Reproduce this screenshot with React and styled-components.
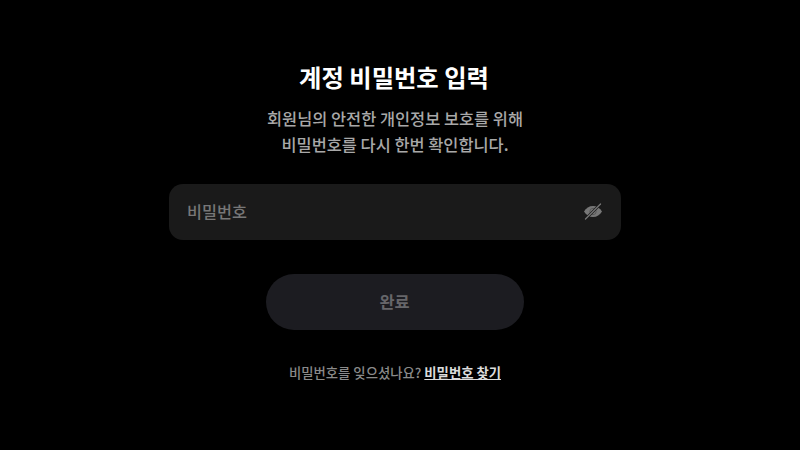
import styled, { createGlobalStyle } from "styled-components"

const GlobalStyle = createGlobalStyle`
  html, body {
    margin: 0;
    height: 100%;
    background: #000;
  }

  body {
    font-family: "Noto Sans CJK KR", "Noto Sans", sans-serif;
  }
`

const EyeOff = () => (
  <svg width="20" height="18" viewBox="0 0 20 18">
    <path
      d="M1 8.5C3 5 6.2 3 10 3s7 2 9 5.5C17 12 13.8 14 10 14S3 12 1 8.5Z"
      fill="#777"
    />
    <circle cx="10" cy="8.5" r="3.2" fill="none" stroke="#5a5a5a" strokeWidth="1" />
    <path d="M17.5 1 2.5 16" stroke="#1a1a1a" strokeWidth="2.6" />
    <path d="M17.5 1 2.5 16" stroke="#777" strokeWidth="1.3" strokeLinecap="round" />
  </svg>
)

const App = () => {
  return (
    <>
      <GlobalStyle />
      <Page>
        <Title>계정 비밀번호 입력</Title>
        <Description>
          회원님의 안전한 개인정보 보호를 위해
          <br />
          비밀번호를 다시 한번 확인합니다.
        </Description>
        <Field>
          <Placeholder>비밀번호</Placeholder>
          <EyeOff />
        </Field>
        <Submit>완료</Submit>
        <Footer>
          비밀번호를 잊으셨나요? <a href="/">비밀번호 찾기</a>
        </Footer>
      </Page>
    </>
  )
}

const Page = styled.main`
  width: 790px;
  height: 450px;
  display: flex;
  flex-direction: column;
  align-items: center;
  padding-top: 59px;
  box-sizing: border-box;
  overflow: hidden;
`

const Title = styled.h1`
  margin: 0 2px 0 0;
  font-size: 24.3px;
  line-height: 36px;
  font-weight: 700;
  color: #fff;
`

const Description = styled.p`
  margin: 10px 0 0;
  font-size: 16.4px;
  line-height: 26px;
  font-weight: 500;
  color: #a8a8a8;
  text-align: center;
`

const Field = styled.div`
  width: 452px;
  height: 56px;
  margin-top: 27px;
  padding: 0 18px;
  box-sizing: border-box;
  display: flex;
  align-items: center;
  justify-content: space-between;
  background: #1a1a1a;
  border-radius: 14px;
`

const Placeholder = styled.span`
  font-size: 16.3px;
  font-weight: 500;
  margin-top: -2px;
  color: #777;
`

const Submit = styled.button`
  width: 258px;
  height: 56px;
  margin: 34px 1px 0 0;
  padding: 0 0 2px;
  border: 0;
  border-radius: 28px;
  background: #1c1c21;
  color: #66666a;
  font-family: inherit;
  font-size: 16.4px;
  font-weight: 700;
`

const Footer = styled.p`
  margin: 33px 0 0;
  font-size: 13.35px;
  line-height: 20px;
  font-weight: 500;
  color: #8a8a8a;

  a {
    color: #dcdcdc;
    font-weight: 700;
    text-decoration: underline;
  }
`

export default App
